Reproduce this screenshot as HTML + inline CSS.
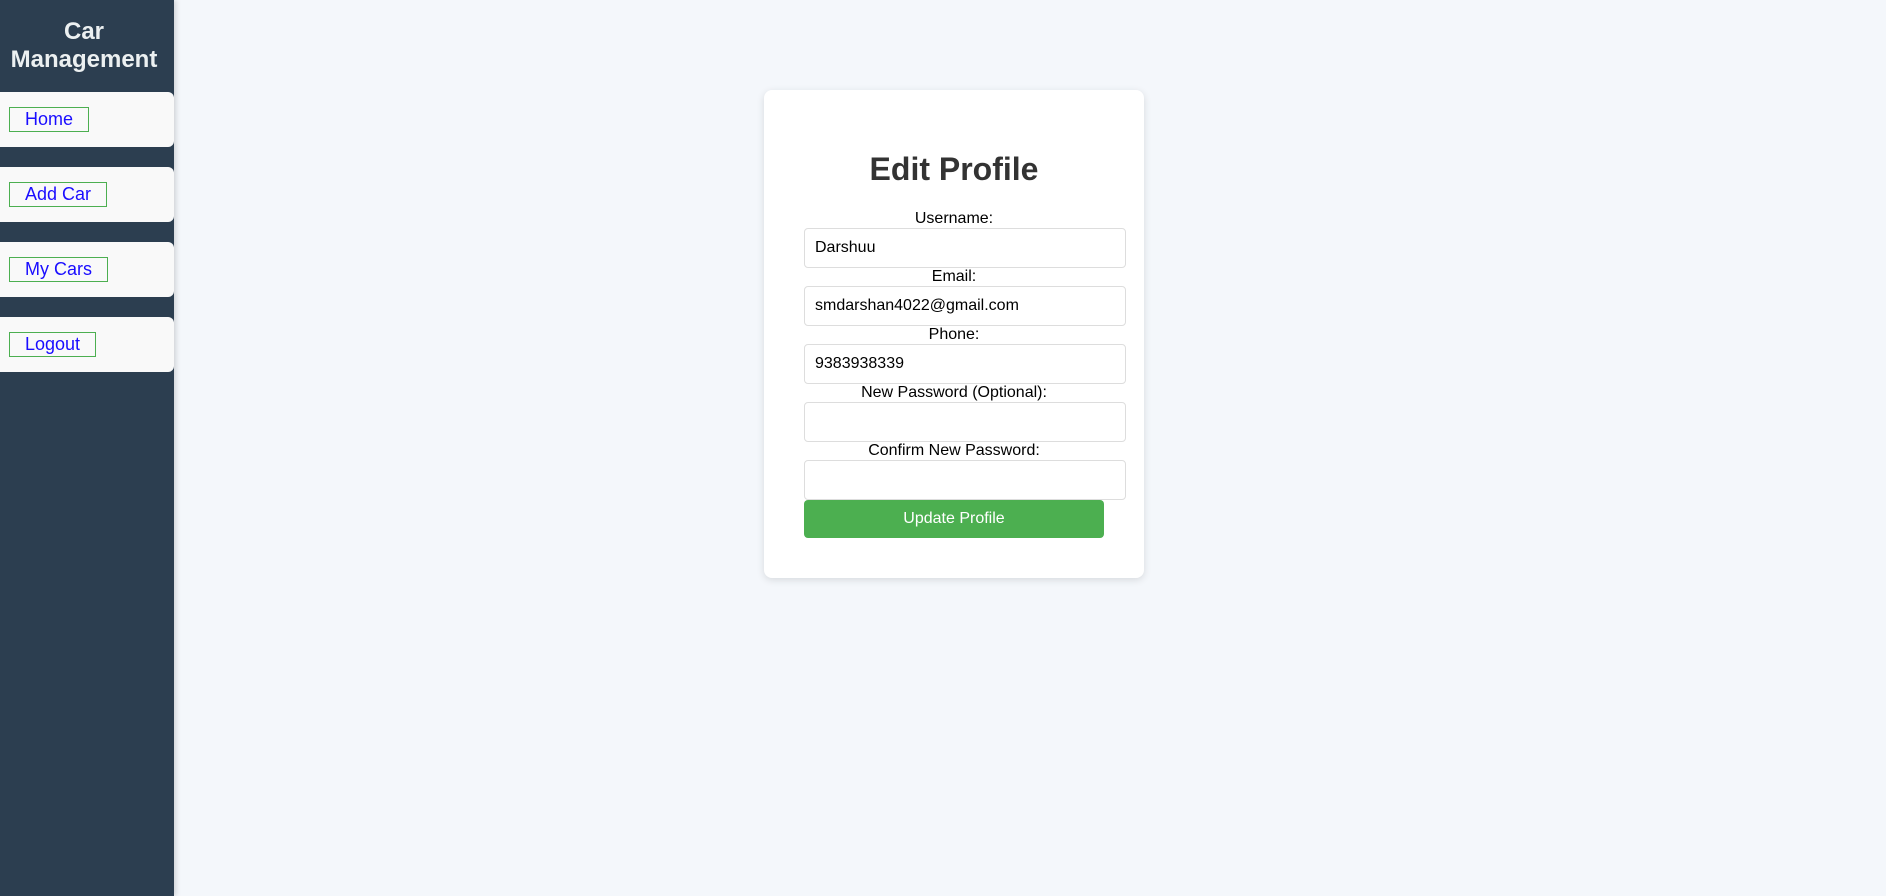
<!DOCTYPE html>
<html><head><meta charset="utf-8"><style>
*{box-sizing:border-box;margin:0;padding:0}
body{width:1886px;height:896px;background:#f4f7fb;font-family:"Liberation Sans",Arial,sans-serif;position:relative;overflow:hidden}
.side{position:absolute;left:0;top:0;width:174px;height:896px;background:#2c3e50;box-shadow:2px 0 5px rgba(0,0,0,.15)}
.side h2{color:#ecf0f1;font-size:24px;line-height:28px;text-align:center;padding-top:18px;font-weight:bold;width:168px}
.nav{position:absolute;left:0;width:174px;height:55px;background:#f9f9f9;border-radius:0 6px 6px 0}
.nav span{position:absolute;left:9px;top:15px;height:25px;border:1px solid #4caf50;color:#1a0dff;font-size:18px;line-height:23px;padding:0 15px}
.card{position:absolute;left:764px;top:90px;width:380px;height:488px;background:#fff;border-radius:8px;box-shadow:0 2px 8px rgba(0,0,0,.12)}
.card h1{position:absolute;left:0;width:380px;top:150px;text-align:center;font-size:32px;color:#333;font-weight:bold;line-height:36px}
.lbl{position:absolute;left:0;width:380px;text-align:center;font-size:16px;line-height:18px;color:#000}
.in{position:absolute;left:40px;width:322px;height:40px;border:1px solid #ddd;border-radius:4px;font-size:16px;line-height:38px;padding-left:10px;color:#000}
.btn{position:absolute;left:40px;top:410px;width:300px;height:38px;background:#4caf50;border-radius:4px;color:#fff;font-size:16px;line-height:38px;text-align:center}
</style></head><body>
<div class="side"><h2>Car<br>Management</h2>
<div class="nav" style="top:92px"><span>Home</span></div>
<div class="nav" style="top:167px"><span>Add Car</span></div>
<div class="nav" style="top:242px"><span>My Cars</span></div>
<div class="nav" style="top:317px"><span>Logout</span></div>
</div>
<div class="card" style="top:90px">
<h1 style="top:61px">Edit Profile</h1>
<div class="lbl" style="top:120px">Username:</div>
<div class="in" style="top:138px">Darshuu</div>
<div class="lbl" style="top:178px">Email:</div>
<div class="in" style="top:196px">smdarshan4022@gmail.com</div>
<div class="lbl" style="top:236px">Phone:</div>
<div class="in" style="top:254px">9383938339</div>
<div class="lbl" style="top:294px">New Password (Optional):</div>
<div class="in" style="top:312px"></div>
<div class="lbl" style="top:352px">Confirm New Password:</div>
<div class="in" style="top:370px"></div>
<div class="btn">Update Profile</div>
</div>
</body></html>
